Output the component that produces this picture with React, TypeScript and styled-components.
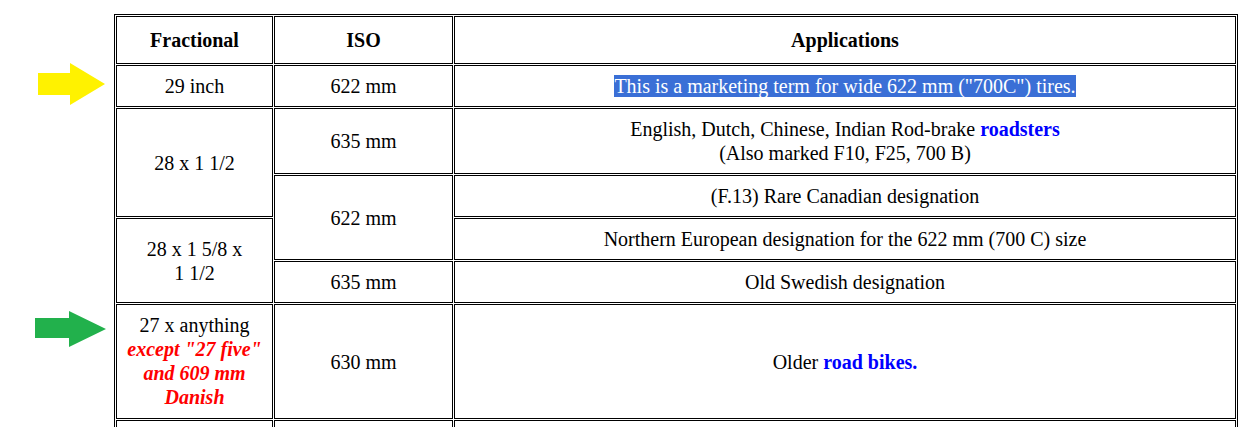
import React from "react";
import styled, { createGlobalStyle } from "styled-components";

const GlobalStyle = createGlobalStyle`
  html, body {
    margin: 0;
    padding: 0;
    background: #ffffff;
  }
  body {
    font-family: "Liberation Serif", "Times New Roman", serif;
    font-size: 20px;
    color: #000000;
  }
`;

const Page = styled.div`
  padding: 14px 0 0 114px;
`;

const SizeTable = styled.table`
  width: 1124px;
  table-layout: fixed;
  border-collapse: separate;
  border-spacing: 1.5px;
  border: 1px solid #000;
`;

const HeadCell = styled.th<{ $width?: number }>`
  box-sizing: border-box;
  width: ${(p) => (p.$width ? `${p.$width}px` : "auto")};
  border: 1px solid #000;
  padding: 11px 8px;
  line-height: 24px;
  font-weight: bold;
  text-align: center;
`;

const Cell = styled.td<{ $tall?: boolean }>`
  position: relative;
  border: 1px solid #000;
  padding: ${(p) => (p.$tall ? "8px 8px 9px" : "8px")};
  line-height: 24px;
  text-align: center;
  vertical-align: middle;
`;

const Selected = styled.span`
  background: #3a6fd6;
  color: #ffffff;
`;

const Link = styled.a`
  color: #0000ff;
  font-weight: bold;
  text-decoration: none;
`;

const Warning = styled.em`
  color: #ff0000;
  font-weight: bold;
`;

const Marker = styled.svg<{ $top: number; $left: number }>`
  position: absolute;
  top: ${(p) => p.$top}px;
  left: ${(p) => p.$left}px;
  display: block;
`;

function YellowArrow() {
  return (
    <Marker $top={-3} $left={-79} width="68" height="43" viewBox="0 0 68 43">
      <polygon points="0,10 32,10 32,0 67,21 32,42 32,32 0,32" fill="#fff200" />
    </Marker>
  );
}

function GreenArrow() {
  return (
    <Marker $top={6} $left={-82} width="72" height="36" viewBox="0 0 72 36">
      <polygon points="0,7 34,7 34,0 71,18 34,36 34,27 0,27" fill="#22b14c" />
    </Marker>
  );
}

export default function App() {
  return (
    <Page>
      <GlobalStyle />
      <SizeTable>
        <thead>
          <tr>
            <HeadCell $width={157}>Fractional</HeadCell>
            <HeadCell $width={179}>ISO</HeadCell>
            <HeadCell>Applications</HeadCell>
          </tr>
        </thead>
        <tbody>
          <tr>
            <Cell>
              <YellowArrow />
              29 inch
            </Cell>
            <Cell>622 mm</Cell>
            <Cell>
              <Selected>This is a marketing term for wide 622 mm ("700C") tires.</Selected>
            </Cell>
          </tr>
          <tr>
            <Cell rowSpan={2}>28 x 1 1/2</Cell>
            <Cell>635 mm</Cell>
            <Cell>
              English, Dutch, Chinese, Indian Rod-brake <Link href="#">roadsters</Link>
              <br />
              (Also marked F10, F25, 700 B)
            </Cell>
          </tr>
          <tr>
            <Cell rowSpan={2}>622 mm</Cell>
            <Cell>(F.13) Rare Canadian designation</Cell>
          </tr>
          <tr>
            <Cell rowSpan={2}>28 x 1 5/8 x 1&nbsp;1/2</Cell>
            <Cell>Northern European designation for the 622 mm (700 C) size</Cell>
          </tr>
          <tr>
            <Cell>635 mm</Cell>
            <Cell>Old Swedish designation</Cell>
          </tr>
          <tr>
            <Cell $tall>
              <GreenArrow />
              27 x anything
              <br />
              <Warning>except "27 five" and 609 mm Danish</Warning>
            </Cell>
            <Cell>630 mm</Cell>
            <Cell>
              Older <Link href="#">road bikes.</Link>
            </Cell>
          </tr>
          <tr>
            <Cell>&nbsp;</Cell>
            <Cell>&nbsp;</Cell>
            <Cell>&nbsp;</Cell>
          </tr>
        </tbody>
      </SizeTable>
    </Page>
  );
}
